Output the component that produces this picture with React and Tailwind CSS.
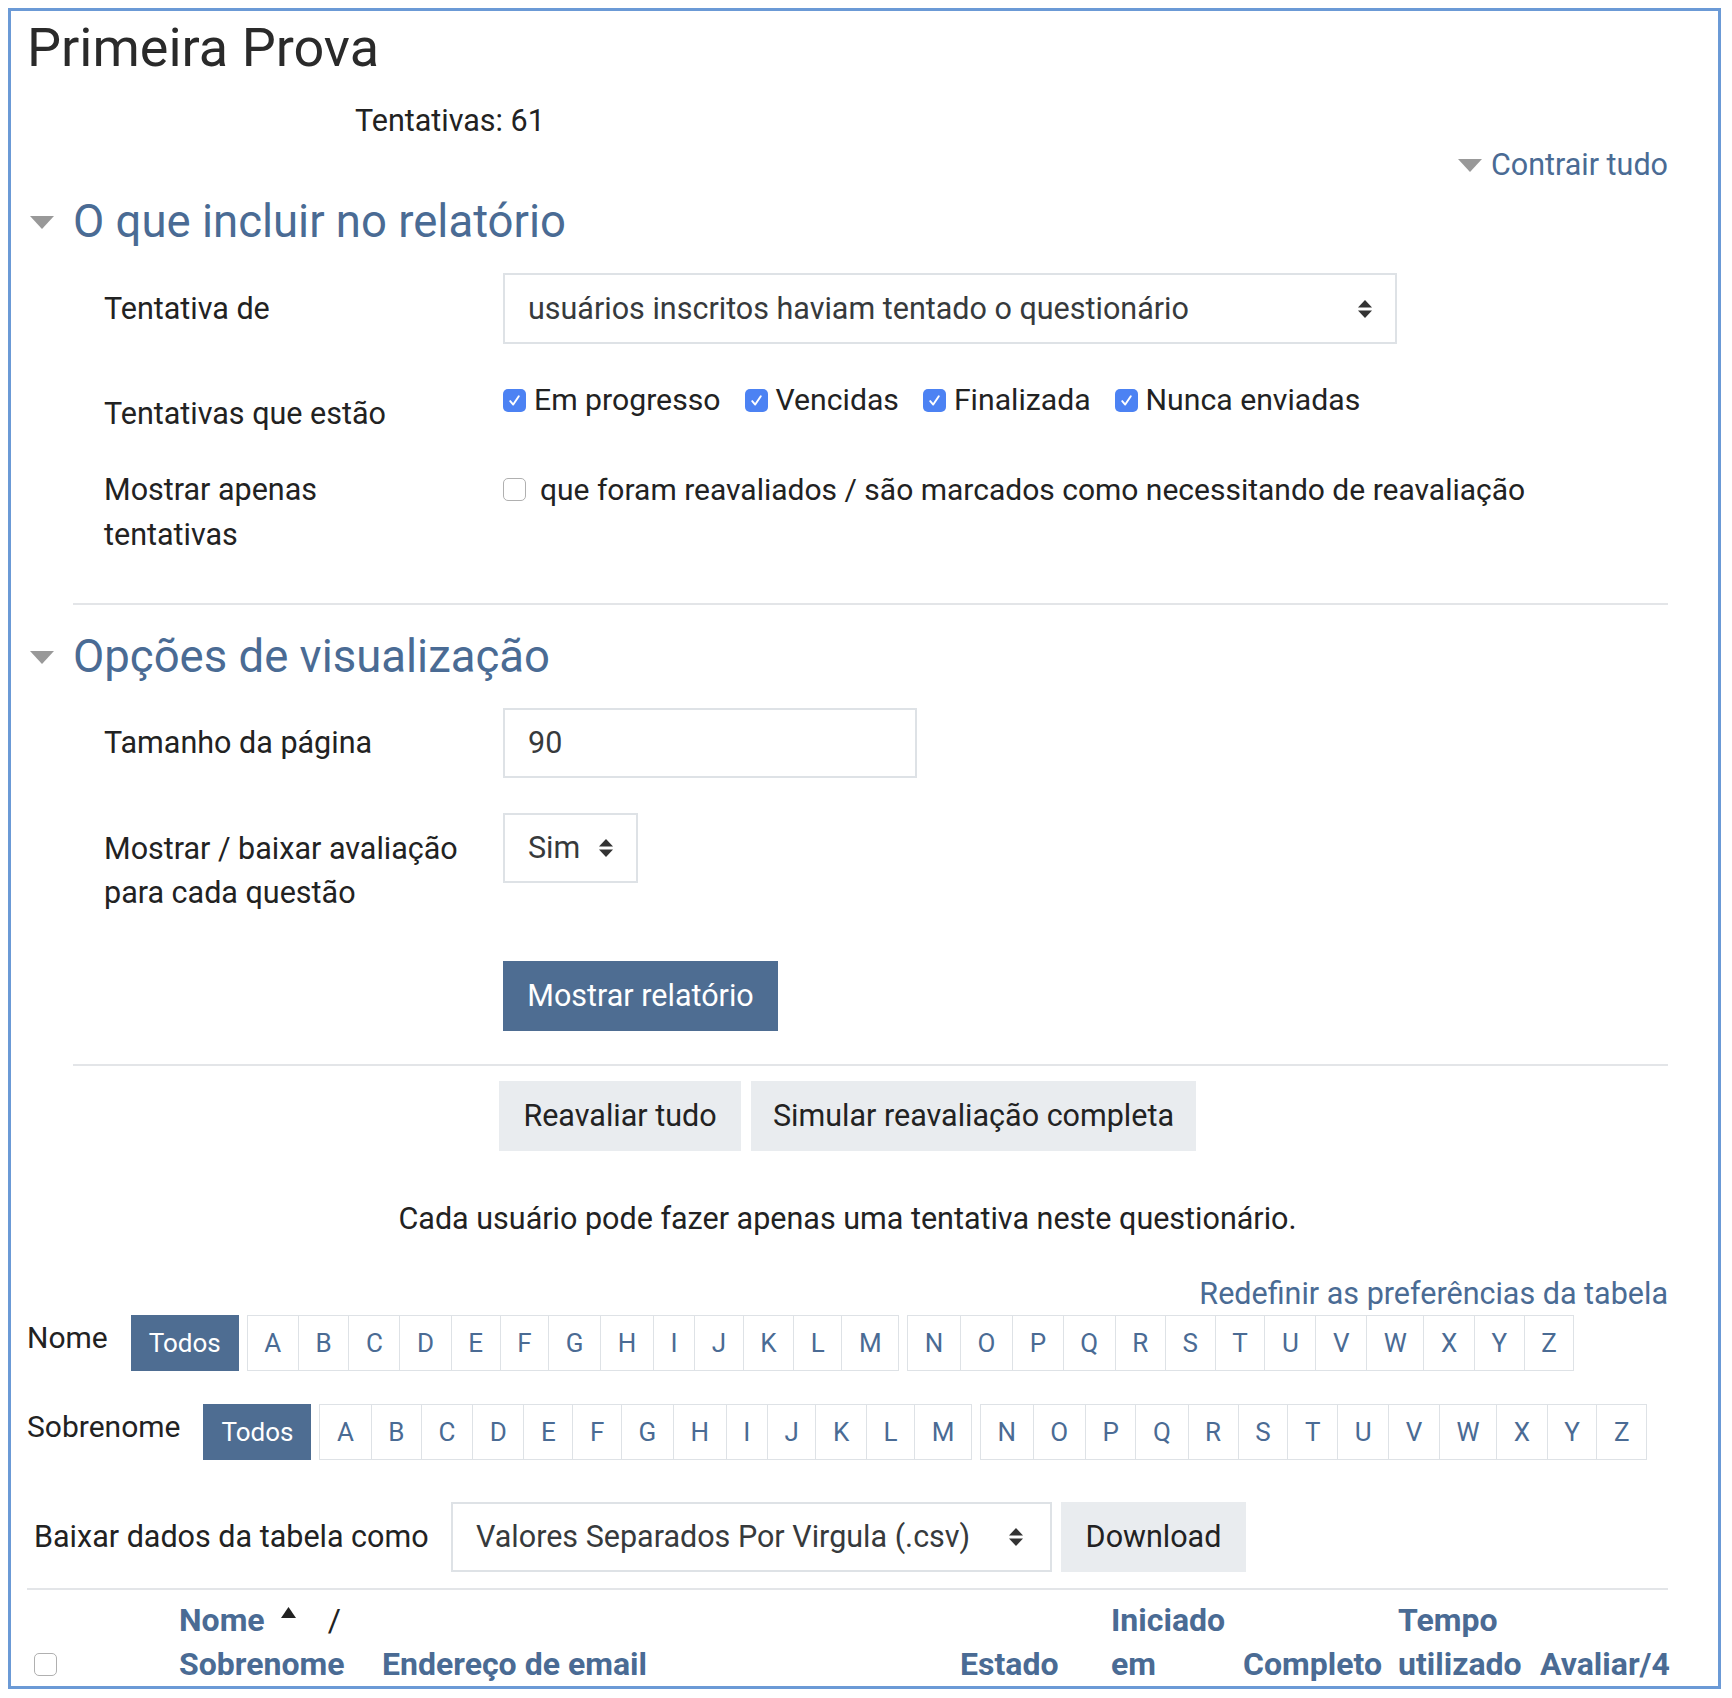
import React from "react";

const font = { fontFamily: "Roboto, 'Liberation Sans', sans-serif" };

function Caret() {
  return (
    <svg width="24" height="13" viewBox="0 0 24 13" className="shrink-0">
      <polygon points="0,0 24,0 12,13" fill="#999999" />
    </svg>
  );
}

function SelectArrows() {
  return (
    <svg width="16" height="18" viewBox="0 0 16 18" className="shrink-0">
      <polygon points="8,0 15,7.5 1,7.5" fill="#333333" />
      <polygon points="1,10.5 15,10.5 8,18" fill="#333333" />
    </svg>
  );
}

function Check({ checked }) {
  if (checked) {
    return (
      <span className="flex items-center justify-center w-[23px] h-[23px] rounded-[5px] bg-[#4c82f3] shrink-0">
        <svg width="15" height="15" viewBox="0 0 14 14">
          <path d="M3 7.6 L5.8 10.8 L11 3" fill="none" stroke="#ffffff" strokeWidth="1.8" strokeLinecap="round" strokeLinejoin="round" />
        </svg>
      </span>
    );
  }
  return <span className="block w-[23px] h-[23px] rounded-[5px] border border-[#b0b0b0] bg-white shrink-0" />;
}

const lettersA = ["A", "B", "C", "D", "E", "F", "G", "H", "I", "J", "K", "L", "M"];
const lettersN = ["N", "O", "P", "Q", "R", "S", "T", "U", "V", "W", "X", "Y", "Z"];

function LetterGroup({ letters }) {
  return (
    <div className="flex">
      {letters.map((l, i) => (
        <span
          key={l}
          className={
            "h-[56px] px-[16.6px] flex items-center border border-[#dee2e6] text-[26px] text-[#4a6b94] bg-white " +
            (i > 0 ? "-ml-px" : "")
          }
        >
          {l}
        </span>
      ))}
    </div>
  );
}

function InitialBar({ label }) {
  return (
    <div className="flex items-start">
      <div className="text-[30px] leading-[44px] text-[#222222] mr-[23px] mt-[1px]">{label}</div>
      <div className="flex gap-[8px]">
        <span className="h-[56px] px-[17px] flex items-center bg-[#4e6d92] border border-[#4e6d92] text-white text-[26px]">Todos</span>
        <LetterGroup letters={lettersA} />
        <LetterGroup letters={lettersN} />
      </div>
    </div>
  );
}

export default function App() {
  return (
    <div className="w-[1732px] h-[1698px] bg-white pt-[8px] pl-[8px]" style={font}>
      <div className="w-[1713px] h-[1681px] border-[3px] border-[#6b9ad6] overflow-hidden pl-[16px] pr-[50px] pt-[4px] text-[#373a3c]">
        {/* Title */}
        <div className="h-[65px] leading-[65px] text-[54px] text-[#2a2a2a]">Primeira Prova</div>

        <div className="mt-[19px] h-[44px] leading-[44px] text-[30.5px] text-[#222222] pl-[328px]">Tentativas: 61</div>

        <div className="h-[44px] flex items-center justify-end gap-[9px]">
          <Caret />
          <span className="text-[30.5px] text-[#4a6b94]">Contrair tudo</span>
        </div>

        {/* Section 1 */}
        <div className="mt-[5px] h-[60px] flex items-center">
          <div className="w-[46px] pl-[3px]">
            <Caret />
          </div>
          <span className="text-[45.5px] text-[#4a6b94]">O que incluir no relatório</span>
        </div>

        <div className="mt-[21px] flex pl-[77px]">
          <div className="w-[399px] h-[71px] flex items-center text-[30.5px] text-[#222222]">Tentativa de</div>
          <div className="w-[894px] h-[71px] border-2 border-[#dee2e6] flex items-center justify-between pl-[23px] pr-[22px] text-[30.5px] text-[#373a3c]">
            <span>usuários inscritos haviam tentado o questionário</span>
            <SelectArrows />
          </div>
        </div>

        <div className="mt-[34px] flex pl-[77px]">
          <div className="w-[399px] pt-[14px] leading-[44px] text-[30.5px] text-[#222222]">Tentativas que estão</div>
          <div className="flex items-center h-[44px] text-[30.2px] text-[#222222]">
            <Check checked />
            <span className="ml-[8px]">Em progresso</span>
            <span className="ml-[24px] flex"><Check checked /></span>
            <span className="ml-[8px]">Vencidas</span>
            <span className="ml-[24px] flex"><Check checked /></span>
            <span className="ml-[8px]">Finalizada</span>
            <span className="ml-[24px] flex"><Check checked /></span>
            <span className="ml-[8px]">Nunca enviadas</span>
          </div>
        </div>

        <div className="mt-[31px] flex pl-[77px]">
          <div className="w-[399px] leading-[45px] text-[30.5px] text-[#222222]">
            Mostrar apenas
            <br />
            tentativas
          </div>
          <div className="flex items-center h-[44px] text-[30px] text-[#222222]">
            <Check checked={false} />
            <span className="ml-[14px]">que foram reavaliados / são marcados como necessitando de reavaliação</span>
          </div>
        </div>

        <div className="mt-[46px] ml-[46px] h-[2px] bg-[#e3e5e8]" />

        {/* Section 2 */}
        <div className="mt-[22px] h-[60px] flex items-center">
          <div className="w-[46px] pl-[3px]">
            <Caret />
          </div>
          <span className="text-[45.5px] text-[#4a6b94]">Opções de visualização</span>
        </div>

        <div className="mt-[21px] flex pl-[77px]">
          <div className="w-[399px] h-[70px] flex items-center text-[30.5px] text-[#222222]">Tamanho da página</div>
          <div className="w-[414px] h-[70px] border-2 border-[#dee2e6] flex items-center pl-[23px] text-[30.5px] text-[#373a3c]">90</div>
        </div>

        <div className="mt-[35px] flex pl-[77px]">
          <div className="w-[399px] pt-[14px] leading-[44px] text-[30.5px] text-[#222222]">
            Mostrar / baixar avaliação
            <br />
            para cada questão
          </div>
          <div className="w-[135px] h-[70px] border-2 border-[#dee2e6] flex items-center justify-between pl-[23px] pr-[22px] text-[30.5px] text-[#373a3c]">
            <span>Sim</span>
            <SelectArrows />
          </div>
        </div>

        <div className="mt-[46px] pl-[476px]">
          <div className="w-[275px] h-[70px] bg-[#4e6d92] text-white text-[30.5px] flex items-center justify-center">Mostrar relatório</div>
        </div>

        <div className="mt-[33px] ml-[46px] h-[2px] bg-[#e3e5e8]" />

        <div className="mt-[15px] flex justify-center gap-[10px]">
          <div className="w-[242px] h-[70px] bg-[#e9ecef] text-[30.5px] text-[#222222] flex items-center justify-center">Reavaliar tudo</div>
          <div className="w-[445px] h-[70px] bg-[#e9ecef] text-[30.5px] text-[#222222] flex items-center justify-center">Simular reavaliação completa</div>
        </div>

        <div className="mt-[46px] h-[44px] leading-[44px] text-center text-[30.5px] text-[#222222]">
          Cada usuário pode fazer apenas uma tentativa neste questionário.
        </div>

        <div className="mt-[31px] h-[44px] leading-[44px] text-right text-[30.5px] text-[#4a6b94]">
          Redefinir as preferências da tabela
        </div>

        <div className="-mt-[1px]">
          <InitialBar label="Nome" />
        </div>
        <div className="mt-[33px]">
          <InitialBar label="Sobrenome" />
        </div>

        <div className="mt-[42px] flex items-center">
          <div className="w-[424px] pl-[7px] text-[30.5px] text-[#222222]">Baixar dados da tabela como</div>
          <div className="w-[601px] h-[70px] border-2 border-[#dee2e6] flex items-center justify-between pl-[23px] pr-[26px] text-[30.5px] text-[#373a3c]">
            <span>Valores Separados Por Virgula (.csv)</span>
            <SelectArrows />
          </div>
          <div className="ml-[9px] w-[185px] h-[70px] bg-[#e9ecef] text-[30.5px] text-[#222222] flex items-center justify-center">Download</div>
        </div>

        <div className="mt-[16px] h-[2px] bg-[#e3e5e8]" />

        <div className="mt-[8px] flex items-end text-[32px] font-bold leading-[44px] text-[#4a6b94]">
          <div className="w-[152px] pl-[7px] h-[44px] flex items-center">
            <Check checked={false} />
          </div>
          <div className="w-[203px]">
            <div className="flex items-center">
              <span>Nome</span>
              <svg width="15" height="11" viewBox="0 0 15 11" className="ml-[16px] -mt-[16px]">
                <polygon points="7.5,0 15,11 0,11" fill="#222222" />
              </svg>
              <span className="ml-[32px] text-[#222222] font-normal">/</span>
            </div>
            <div>Sobrenome</div>
          </div>
          <div className="w-[578px]">Endereço de email</div>
          <div className="w-[151px]">Estado</div>
          <div className="w-[132px]">
            <div>Iniciado</div>
            <div>em</div>
          </div>
          <div className="w-[155px]">Completo</div>
          <div className="w-[142px]">
            <div>Tempo</div>
            <div>utilizado</div>
          </div>
          <div className="w-[128px]">Avaliar/4</div>
        </div>
      </div>
    </div>
  );
}
